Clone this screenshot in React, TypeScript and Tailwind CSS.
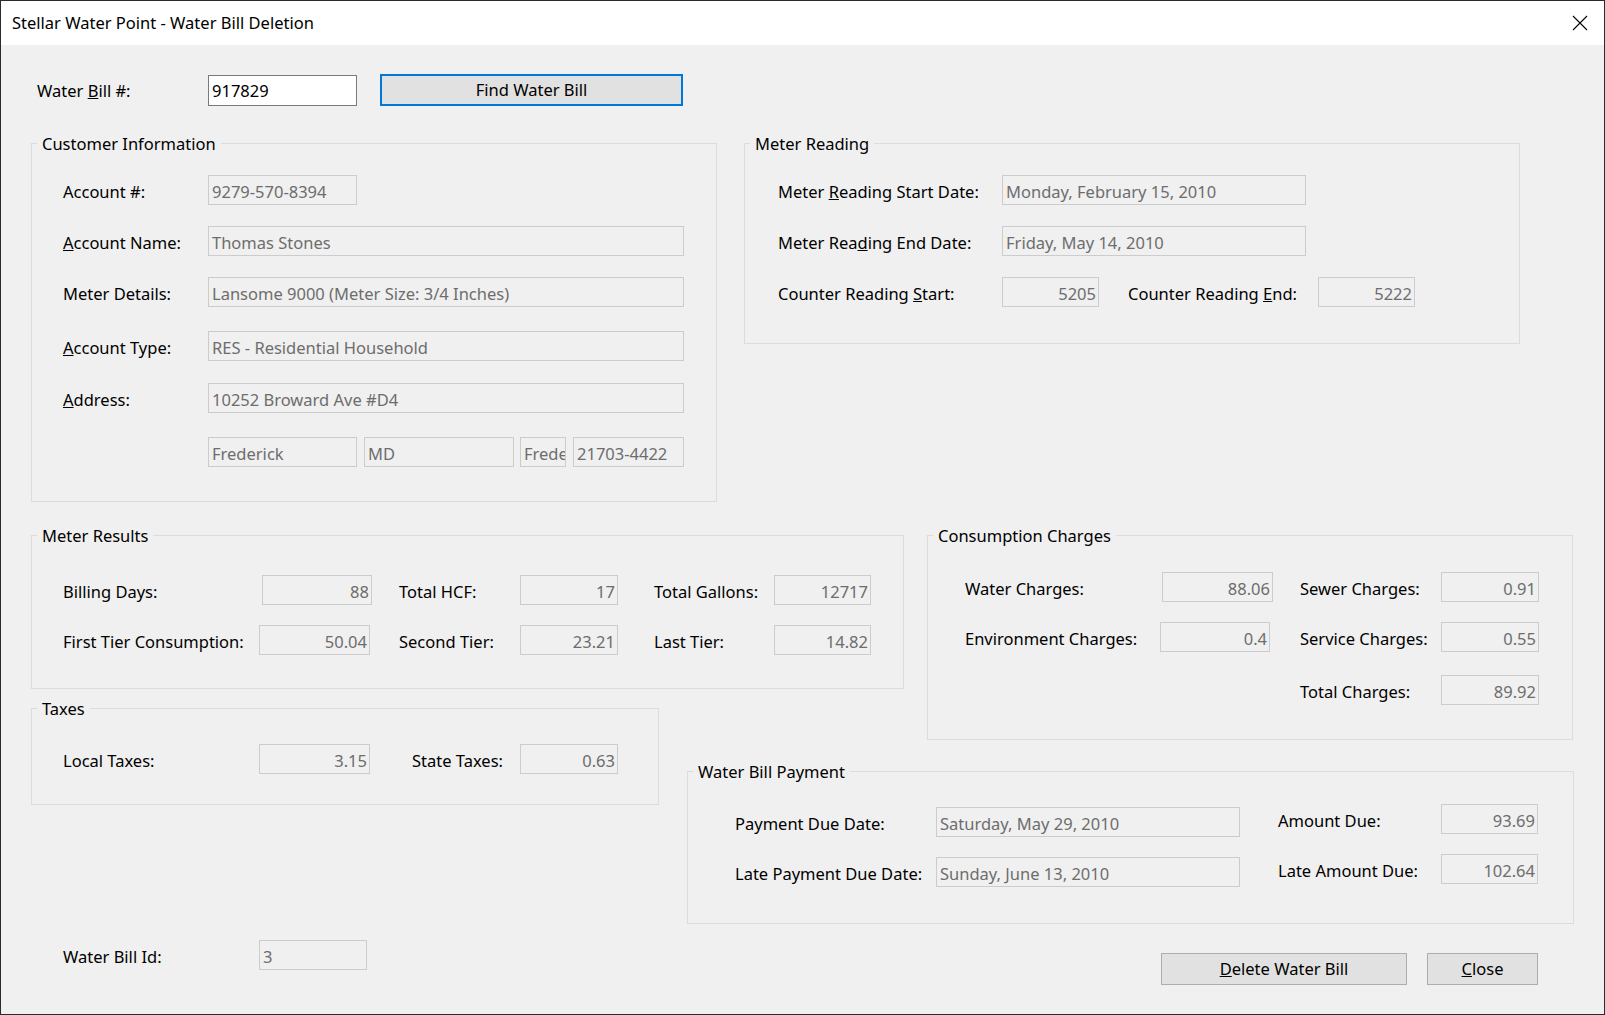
import type { ReactElement, ReactNode } from 'react';

interface FieldProps {
	readonly value: string;
	readonly className?: string;
	readonly right?: boolean;
}

// disabled WinForms text box: flat gray border, gray text
function Field({ value, className = '', right = false }: FieldProps): ReactElement {
	return (
		<div
			className={`flex h-[30px] shrink-0 items-center overflow-hidden whitespace-nowrap border border-[#cccccc] bg-[#f0f0f0] pt-[3px] text-[#6d6d6d] ${
				right ? 'justify-end pr-[2px]' : 'pl-[3px]'
			} ${className}`}
		>
			<span>{value}</span>
		</div>
	);
}

function Label({ children, className = '' }: { readonly children: ReactNode; readonly className?: string }): ReactElement {
	return (
		<span className={`flex h-[30px] shrink-0 items-center whitespace-nowrap pt-[3px] ${className}`}>
			<span>{children}</span>
		</span>
	);
}

function GroupBox({
	title,
	className = '',
	children,
}: {
	readonly title: string;
	readonly className?: string;
	readonly children: ReactNode;
}): ReactElement {
	return (
		<div className={`relative border border-[#dcdcdc] ${className}`}>
			<span className="absolute left-[5px] top-[-12px] bg-[#f0f0f0] px-[5px] leading-[24px]">{title}</span>
			{children}
		</div>
	);
}

function Button({ children, className = '' }: { readonly children: ReactNode; readonly className?: string }): ReactElement {
	return (
		<button
			type="button"
			className={`flex h-[32px] shrink-0 items-center justify-center border border-[#adadad] bg-[#e1e1e1] ${className}`}
		>
			<span>{children}</span>
		</button>
	);
}

export default function App(): ReactElement {
	return (
		<div className="flex h-[1015px] w-[1605px] flex-col overflow-hidden border border-[#2b2b2b] bg-[#f0f0f0] font-['Noto_Sans',sans-serif] text-[16.5px] leading-[24px] text-black">
			{/* title bar */}
			<div className="flex h-[44px] shrink-0 items-center justify-between bg-white pl-[11px] pr-[16px]">
				<span>Stellar Water Point - Water Bill Deletion</span>
				<svg width="16" height="16" viewBox="0 0 16 16" fill="none" stroke="#000" strokeWidth="1.1">
					<path d="M1 1 L15 15 M15 1 L1 15" />
				</svg>
			</div>

			{/* lookup row */}
			<div className="mt-[29px] flex h-[32px] items-center">
				<span className="ml-[36px] w-[171px] whitespace-nowrap pt-[2px]">
					Water <u>B</u>ill #:
				</span>
				<div className="flex h-[31px] w-[149px] items-center border border-[#7a7a7a] bg-white pl-[3px] pt-[1px]">
					917829
				</div>
				<button
					type="button"
					className="ml-[23px] flex h-[32px] w-[303px] items-center justify-center border-2 border-[#0078d7] bg-[#e1e1e1]"
				>
					Find Water Bill
				</button>
			</div>

			{/* customer + meter reading */}
			<div className="mt-[37px] flex items-start">
				<GroupBox title="Customer Information" className="ml-[30px] h-[359px] w-[686px] pl-[31px] pt-[31px]">
					<div className="flex">
						<Label className="w-[145px]">Account #:</Label>
						<Field value="9279-570-8394" className="w-[149px]" />
					</div>
					<div className="mt-[21px] flex">
						<Label className="w-[145px]">
							<u>A</u>ccount Name:
						</Label>
						<Field value="Thomas Stones" className="w-[476px]" />
					</div>
					<div className="mt-[21px] flex">
						<Label className="w-[145px]">Meter Details:</Label>
						<Field value="Lansome 9000 (Meter Size: 3/4 Inches)" className="w-[476px]" />
					</div>
					<div className="mt-[24px] flex">
						<Label className="w-[145px]">
							<u>A</u>ccount Type:
						</Label>
						<Field value="RES - Residential Household" className="w-[476px]" />
					</div>
					<div className="mt-[22px] flex">
						<Label className="w-[145px]">
							<u>A</u>ddress:
						</Label>
						<Field value="10252 Broward Ave #D4" className="w-[476px]" />
					</div>
					<div className="mt-[24px] flex pl-[145px]">
						<Field value="Frederick" className="w-[149px]" />
						<Field value="MD" className="ml-[7px] w-[150px]" />
						<Field value="Frederick" className="ml-[6px] w-[46px]" />
						<Field value="21703-4422" className="ml-[7px] w-[111px]" />
					</div>
				</GroupBox>

				<GroupBox title="Meter Reading" className="ml-[27px] h-[201px] w-[776px] pl-[33px] pt-[31px]">
					<div className="flex">
						<Label className="w-[224px]">
							Meter <u>R</u>eading Start Date:
						</Label>
						<Field value="Monday, February 15, 2010" className="w-[304px]" />
					</div>
					<div className="mt-[21px] flex">
						<Label className="w-[224px]">
							Meter Rea<u>d</u>ing End Date:
						</Label>
						<Field value="Friday, May 14, 2010" className="w-[304px]" />
					</div>
					<div className="mt-[21px] flex">
						<Label className="w-[224px]">
							Counter Reading <u>S</u>tart:
						</Label>
						<Field value="5205" right className="w-[97px]" />
						<Label className="ml-[29px] w-[190px]">
							Counter Reading <u>E</u>nd:
						</Label>
						<Field value="5222" right className="w-[97px]" />
					</div>
				</GroupBox>
			</div>

			{/* results, charges, taxes, payment */}
			<div className="ml-[30px] mt-[33px] grid grid-cols-[628px_28px_217px_23px_647px] grid-rows-[154px_19px_32px_31px_34px_119px_auto]">
				<GroupBox title="Meter Results" className="col-span-3 col-start-1 row-start-1 pl-[31px] pt-[39px]">
					<div className="flex">
						<Label className="w-[199px]">Billing Days:</Label>
						<Field value="88" right className="w-[110px]" />
						<Label className="ml-[27px] w-[121px]">Total HCF:</Label>
						<Field value="17" right className="w-[98px]" />
						<Label className="ml-[36px] w-[120px]">Total Gallons:</Label>
						<Field value="12717" right className="w-[97px]" />
					</div>
					<div className="mt-[20px] flex">
						<Label className="w-[196px]">First Tier Consumption:</Label>
						<Field value="50.04" right className="w-[111px]" />
						<Label className="ml-[29px] w-[121px]">Second Tier:</Label>
						<Field value="23.21" right className="w-[98px]" />
						<Label className="ml-[36px] w-[120px]">Last Tier:</Label>
						<Field value="14.82" right className="w-[97px]" />
					</div>
				</GroupBox>

				<GroupBox
					title="Consumption Charges"
					className="col-start-5 row-span-3 row-start-1 w-[646px] pl-[37px] pt-[36px]"
				>
					<div className="flex">
						<Label className="w-[197px]">Water Charges:</Label>
						<Field value="88.06" right className="w-[111px]" />
						<Label className="ml-[27px] w-[141px]">Sewer Charges:</Label>
						<Field value="0.91" right className="w-[98px]" />
					</div>
					<div className="mt-[20px] flex">
						<Label className="w-[195px]">Environment Charges:</Label>
						<Field value="0.4" right className="w-[110px]" />
						<Label className="ml-[30px] w-[141px]">Service Charges:</Label>
						<Field value="0.55" right className="w-[98px]" />
					</div>
					<div className="mt-[23px] flex pl-[335px]">
						<Label className="w-[141px]">Total Charges:</Label>
						<Field value="89.92" right className="w-[98px]" />
					</div>
				</GroupBox>

				<GroupBox title="Taxes" className="col-start-1 row-span-3 row-start-3 pl-[31px] pt-[35px]">
					<div className="flex">
						<Label className="w-[196px]">Local Taxes:</Label>
						<Field value="3.15" right className="w-[111px]" />
						<Label className="ml-[42px] w-[108px]">State Taxes:</Label>
						<Field value="0.63" right className="w-[98px]" />
					</div>
				</GroupBox>

				<GroupBox title="Water Bill Payment" className="col-span-3 col-start-3 row-span-2 row-start-5 flex pl-[47px]">
					<div className="flex flex-col pt-[35px]">
						<div className="flex">
							<Label className="w-[201px]">Payment Due Date:</Label>
							<Field value="Saturday, May 29, 2010" className="w-[304px]" />
						</div>
						<div className="mt-[20px] flex">
							<Label className="w-[201px]">Late Payment Due Date:</Label>
							<Field value="Sunday, June 13, 2010" className="w-[304px]" />
						</div>
					</div>
					<div className="ml-[38px] flex flex-col pt-[32px]">
						<div className="flex">
							<Label className="w-[163px]">Amount Due:</Label>
							<Field value="93.69" right className="w-[97px]" />
						</div>
						<div className="mt-[20px] flex">
							<Label className="w-[163px]">Late Amount Due:</Label>
							<Field value="102.64" right className="w-[97px]" />
						</div>
					</div>
				</GroupBox>

				<div className="col-start-1 row-start-7 mt-[16px] flex pl-[32px]">
					<Label className="w-[196px]">Water Bill Id:</Label>
					<Field value="3" className="w-[108px]" />
				</div>

				<div className="col-span-3 col-start-3 row-start-7 mt-[29px] flex justify-end pr-[36px]">
					<Button className="w-[246px]">
						<u>D</u>elete Water Bill
					</Button>
					<Button className="ml-[20px] w-[111px]">
						<u>C</u>lose
					</Button>
				</div>
			</div>
		</div>
	);
}
